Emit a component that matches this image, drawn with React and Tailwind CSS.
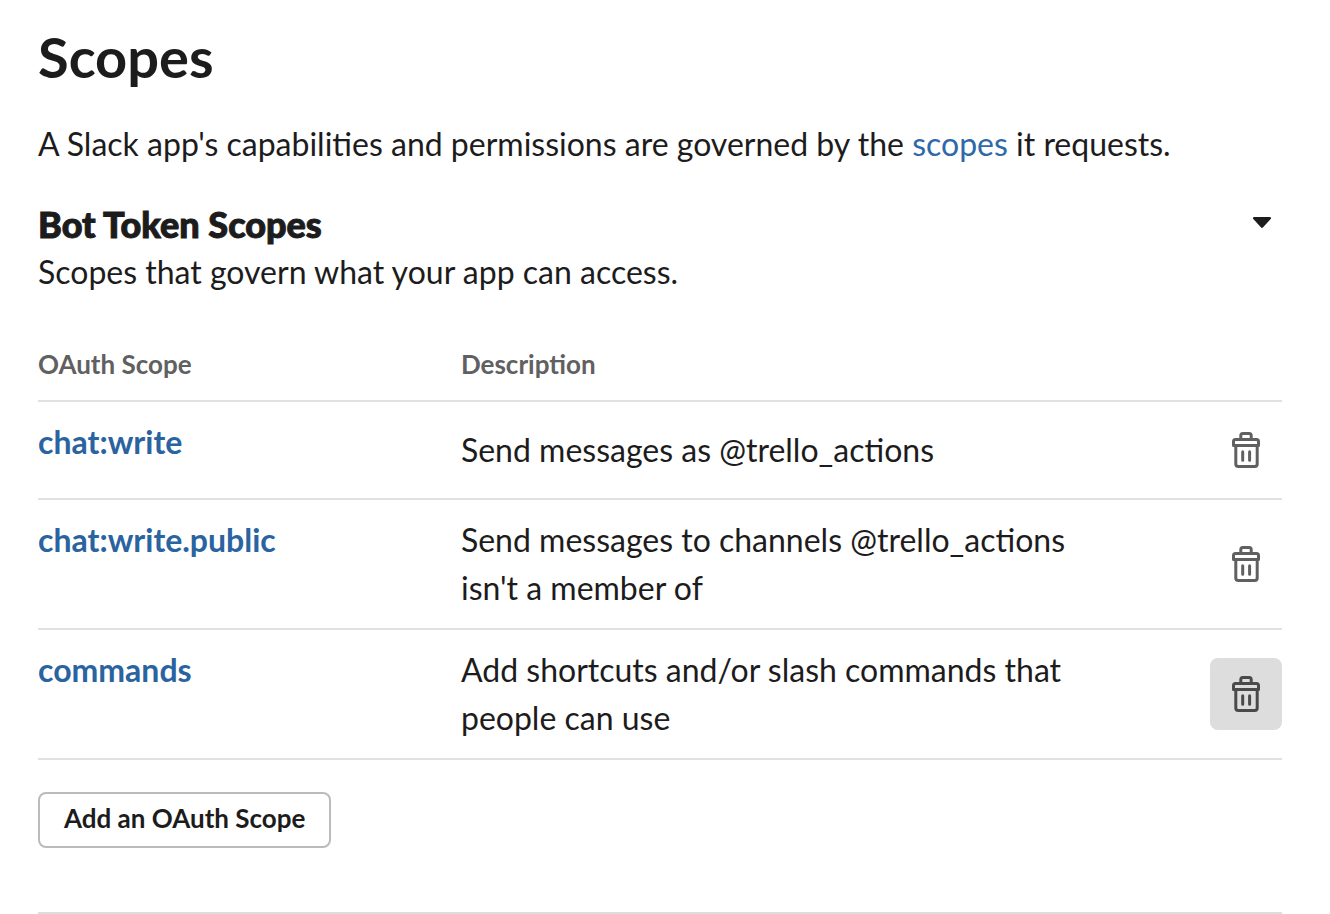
import { useState } from 'react';
import clsx from 'clsx';

const SCOPES = [
  { name: 'chat:write', description: 'Send messages as @trello_actions' },
  { name: 'chat:write.public', description: "Send messages to channels @trello_actions isn't a member of" },
  { name: 'commands', description: 'Add shortcuts and/or slash commands that people can use' },
];

function TrashIcon() {
  return (
    <svg
      width="36"
      height="36"
      viewBox="0 0 36 36"
      fill="none"
      stroke="currentColor"
      strokeWidth="3"
      strokeLinecap="round"
      strokeLinejoin="round"
      aria-hidden="true"
    >
      <path d="M12.8 7V3.5a2 2 0 0 1 2-2h6.4a2 2 0 0 1 2 2V7" strokeLinecap="butt" />
      <path d="M5.5 13.5v-4a2 2 0 0 1 2-2h21a2 2 0 0 1 2 2v4z" />
      <path d="M7.8 14v18a2.5 2.5 0 0 0 2.5 2.5h16.4a2.5 2.5 0 0 0 2.5-2.5V14" strokeLinecap="butt" />
      <path d="M14.7 19.7v8.6M21.6 19.7v8.6" />
    </svg>
  );
}

function ScopeRow({ scope, active }) {
  return (
    <tr className="border-b-2 border-[#e1e1e1]">
      <td className="py-4 align-top font-bold leading-[48px]">
        <a href="#scope" className="text-[#2a64a0] hover:underline">{scope.name}</a>
      </td>
      <td className="py-4 pr-4 leading-[48px]">{scope.description}</td>
      <td className="py-3 text-right align-middle">
        <button
          type="button"
          aria-label={`Remove ${scope.name}`}
          className={clsx(
            'inline-flex size-[72px] items-center justify-center rounded-lg align-middle',
            active ? 'bg-[#dddddd] text-[#4a4a4a]' : 'text-[#616061] hover:bg-[#dddddd]'
          )}
        >
          <TrashIcon />
        </button>
      </td>
    </tr>
  );
}

function App() {
  const [open, setOpen] = useState(true);

  return (
    <main className="bg-white pt-6 pr-12 pl-[38px] font-[Lato,sans-serif] text-[32px] leading-[48px] text-[#1d1c1d]">
      <h1 className="text-[56px] leading-[66px] font-bold">Scopes</h1>
      <p className="mt-[30px]">
        A Slack app's capabilities and permissions are governed by the{' '}
        <a href="#scopes" className="text-[#2e69a8] hover:underline">scopes</a> it requests.
      </p>

      <section className="mt-8">
        <div className="flex items-center justify-between">
          <h2 className="text-[36px] leading-[48px] font-black [-webkit-text-stroke:1px_#1d1c1d]">Bot Token Scopes</h2>
          <button
            type="button"
            aria-label="Toggle bot token scopes"
            aria-expanded={open}
            onClick={() => setOpen(!open)}
            className="px-2.5 pb-0.5"
          >
            <svg width="20" height="12" viewBox="0 0 20 12" fill="currentColor" aria-hidden="true">
              <path d="M2.2 0h15.6c1.2 0 1.7 1.3.9 2.1l-7.6 8.2a1.5 1.5 0 0 1-2.2 0L1.3 2.1C.5 1.3 1 0 2.2 0z" />
            </svg>
          </button>
        </div>
        <p>Scopes that govern what your app can access.</p>

        {open && (
          <>
            <table className="mt-7 w-full table-fixed border-collapse">
              <colgroup>
                <col className="w-[34%]" />
                <col className="w-[52%]" />
                <col />
              </colgroup>
              <thead>
                <tr className="border-b-2 border-[#e1e1e1] text-left text-[26px] leading-[40px] text-[#616061]">
                  <th className="pt-5 pb-4 font-bold">OAuth Scope</th>
                  <th className="pt-5 pb-4 font-bold">Description</th>
                  <td />
                </tr>
              </thead>
              <tbody>
                {SCOPES.map((scope) => (
                  <ScopeRow key={scope.name} scope={scope} active={scope.name === 'commands'} />
                ))}
              </tbody>
            </table>

            <button
              type="button"
              className="mt-8 block h-14 rounded-lg border-2 border-[#bbbbbb] px-6 pb-1 text-[26px] leading-[48px] font-bold hover:bg-gray-50"
            >
              Add an OAuth Scope
            </button>
          </>
        )}
      </section>

      <hr className="mt-16 border-t-2 border-[#dddddd]" />
    </main>
  );
}

export default App;
